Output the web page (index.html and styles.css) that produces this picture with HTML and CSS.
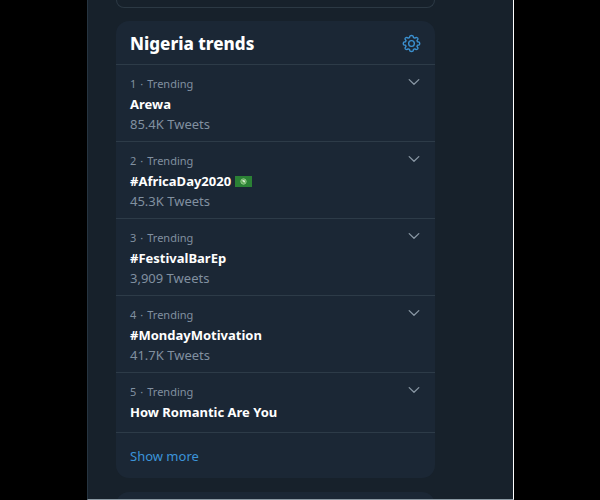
FILE: index.html
```html
<!DOCTYPE html>
<html lang="en">
<head>
<meta charset="utf-8">
<meta name="viewport" content="width=device-width, initial-scale=1">
<title>Nigeria trends</title>
<link rel="stylesheet" href="styles.css">
</head>
<body>
<svg class="sprite" aria-hidden="true">
  <symbol id="chevron" viewBox="0 0 12 8"><path d="M1.2 1.6 6 6.3l4.800-4.700" fill="none" stroke="currentColor" stroke-width="1.300" stroke-linecap="round" stroke-linejoin="round"/></symbol>
</svg>
<main class="sidebar">
  <div class="card-outline"></div>
  <section class="trends" aria-labelledby="trends-title">
    <header class="trends-header">
      <h1 class="trends-title" id="trends-title">Nigeria trends</h1>
      <button class="icon-button settings" type="button" aria-label="Settings">
        <svg class="gear" viewBox="0 0 24 24" fill="none" stroke="currentColor" stroke-width="1.700" stroke-linejoin="round" aria-hidden="true">
          <path d="M10 2.500Q12 1.300 14 2.500L14.500 4.600Q15.400 4.900 16.200 5.300L18.100 4.200Q20.200 4.600 20.300 6.300L18.900 8.400Q19.300 9.100 19.500 9.800L21.800 10.200Q23 12 21.800 13.800L19.500 14.200Q19.300 15 18.900 15.700L20.300 17.700Q20.200 19.600 18.100 19.800L16.200 18.700Q15.400 19.100 14.500 19.400L14 21.500Q12 22.700 10 21.500L9.500 19.400Q8.600 19.100 7.800 18.700L5.900 19.800Q3.800 19.600 3.700 17.700L5.100 15.700Q4.700 15 4.500 14.200L2.200 13.800Q1 12 2.200 10.200L4.500 9.800Q4.700 9.100 5.100 8.400L3.700 6.300Q3.800 4.600 5.900 4.200L7.800 5.300Q8.600 4.900 9.500 4.600Z"/>
          <circle cx="12" cy="12" r="3.600"/>
        </svg>
      </button>
    </header>
    <ol class="trend-list">
      <li class="trend">
        <div class="trend-text"><p class="meta"><span>1</span><span>·</span><span>Trending</span></p><h2 class="name">Arewa</h2><p class="count">85.4K Tweets</p></div>
        <button class="icon-button" type="button" aria-label="More about Arewa"><svg class="chevron"><use href="#chevron"/></svg></button>
      </li>
      <li class="trend">
        <div class="trend-text"><p class="meta"><span>2</span><span>·</span><span>Trending</span></p>
          <h2 class="name">#AfricaDay2020<svg class="flag" viewBox="0 0 17 11" role="img" aria-label="African Union flag"><path d="M0 0h17v11H0z" fill="#2b8135"/><circle cx="8.500" cy="5.500" r="2.700" fill="#5ba653" stroke="#a5d49b" stroke-width=".8"/><path d="m7.500 4 2 .2.600 1.300-1 1.500-.7-1.300-1-.4z" fill="#e2f0db"/></svg></h2>
          <p class="count">45.3K Tweets</p></div>
        <button class="icon-button" type="button" aria-label="More about #AfricaDay2020"><svg class="chevron"><use href="#chevron"/></svg></button>
      </li>
      <li class="trend">
        <div class="trend-text"><p class="meta"><span>3</span><span>·</span><span>Trending</span></p><h2 class="name">#FestivalBarEp</h2><p class="count">3,909 Tweets</p></div>
        <button class="icon-button" type="button" aria-label="More about #FestivalBarEp"><svg class="chevron"><use href="#chevron"/></svg></button>
      </li>
      <li class="trend">
        <div class="trend-text"><p class="meta"><span>4</span><span>·</span><span>Trending</span></p><h2 class="name">#MondayMotivation</h2><p class="count">41.7K Tweets</p></div>
        <button class="icon-button" type="button" aria-label="More about #MondayMotivation"><svg class="chevron"><use href="#chevron"/></svg></button>
      </li>
      <li class="trend">
        <div class="trend-text"><p class="meta"><span>5</span><span>·</span><span>Trending</span></p><h2 class="name">How Romantic Are You</h2></div>
        <button class="icon-button" type="button" aria-label="More about How Romantic Are You"><svg class="chevron"><use href="#chevron"/></svg></button>
      </li>
    </ol>
    <a class="show-more" href="#">Show more</a>
  </section>
  <div class="next-card"></div>
</main>
</body>
</html>
```
FILE: styles.css
```css
* { box-sizing: border-box; }

body {
  margin: 0;
  background: #000;
  color: #fff;
  font-family: "Noto Sans", "Open Sans", sans-serif;
  font-size: 13px;
  line-height: 20px;
}

h1, h2, p, ol { margin: 0; padding: 0; }

.sprite { display: none; }

.sidebar {
  display: flex;
  flex-direction: column;
  height: 100vh;
  margin: 0 86px 0 87px;
  padding: 0 78px 0 28px;
  overflow: hidden;
  background: #17212b;
  border-left: 1px solid #263440;
  border-right: 1px solid #fff;
  border-bottom: 1px solid #8b99a3;
}

.card-outline {
  flex: none;
  height: 8px;
  margin-bottom: 13px;
  border: 1px solid #2c3944;
  border-top: 0;
  border-radius: 0 0 12px 12px;
}

.trends {
  flex: none;
  background: #1b2735;
  border-radius: 13px;
}

.trends-header {
  display: flex;
  align-items: center;
  justify-content: space-between;
  height: 44px;
  padding: 2px 14px 0;
  border-bottom: 1px solid #2d3b48;
}

.trends-title {
  font-size: 17px;
  font-weight: 800;
  line-height: 24px;
}

.trend-list { list-style: none; }

.trend {
  display: flex;
  justify-content: space-between;
  padding: 9px 14px 7px;
  border-bottom: 1px solid #2d3b48;
}

.trend:last-child { padding-bottom: 10px; }

.meta {
  display: flex;
  gap: 4px;
  color: #8190a0;
  font-size: 11px;
}

.name {
  display: flex;
  align-items: center;
  gap: 4px;
  font-size: 13px;
  font-weight: 700;
  line-height: 20px;
}

.count { color: #8190a0; }

.icon-button {
  display: flex;
  align-self: flex-start;
  padding: 4px 0;
  border: 0;
  background: none;
  color: #8896a3;
}

.settings { align-self: center; padding: 0; color: #3c92d2; }

.gear { width: 19px; height: 19px; }

.chevron { width: 14px; height: 8px; }

.flag { width: 17px; height: 11px; }

.show-more {
  display: block;
  padding: 13px 14px 12px;
  color: #3b94d9;
  text-decoration: none;
}

.next-card {
  flex: none;
  height: 40px;
  margin-top: 14px;
  background: #1b2735;
  border-radius: 13px;
}
```
